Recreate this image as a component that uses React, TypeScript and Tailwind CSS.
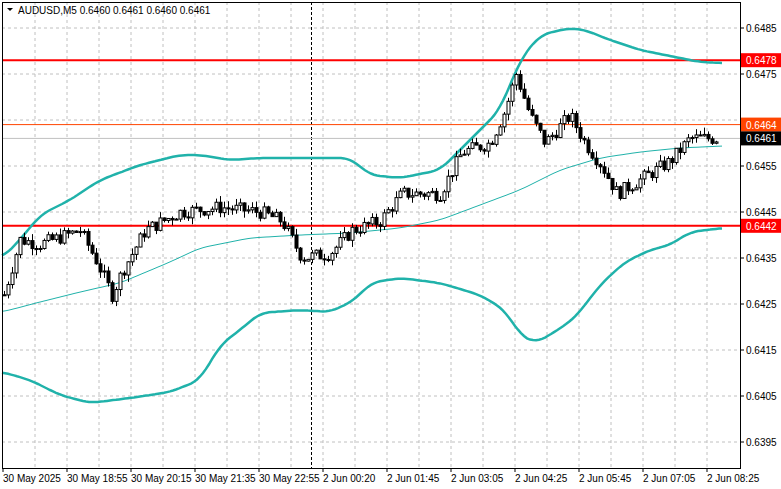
import React from 'react';

const W = 781;
const H = 489;
const R = 740; // right edge of plot
const B = 468; // bottom edge of plot
const y = (p: number) => 28 + (0.6485 - p) * 46000;

const keys: [number, number][] = [
  [4, 0.6427], [20, 0.6439], [40, 0.6438], [80, 0.6441], [95, 0.6435], [112, 0.6427], [122, 0.6432],
  [145, 0.6441], [180, 0.6445], [220, 0.6446], [260, 0.6445], [282, 0.6443], [302, 0.6435],
  [330, 0.6436], [352, 0.6441], [380, 0.6443], [402, 0.6449], [440, 0.6449], [462, 0.6458],
  [490, 0.646], [505, 0.6467], [516, 0.6475], [530, 0.6466], [545, 0.646], [570, 0.6466],
  [585, 0.646], [602, 0.6455], [617, 0.6449], [640, 0.6452], [670, 0.6456], [690, 0.6461], [716, 0.6461],
];

const interp = (k: [number, number][], x: number) => {
  for (let i = 0; i < k.length - 1; i++) {
    const [x0, p0] = k[i];
    const [x1, p1] = k[i + 1];
    if (x >= x0 && x <= x1) return p0 + ((p1 - p0) * (x - x0)) / (x1 - x0);
  }
  return k[k.length - 1][1];
};

let seed = 7;
const rnd = () => {
  seed = (seed * 9301 + 49297) % 233280;
  return seed / 233280;
};

type Candle = { x: number; o: number; c: number; h: number; l: number };
const candles: Candle[] = [];
let prev = 0.6427;
for (let x = 4; x <= 716; x += 4) {
  const t = interp(keys, x) + (rnd() - 0.5) * 0.0003;
  const o = prev;
  const c = t;
  const h = Math.max(o, c) + rnd() * 0.00015;
  const l = Math.min(o, c) - rnd() * 0.00015;
  candles.push({ x, o, c, h, l });
  prev = c;
}

// band shapes in pixel space, read off the chart
const upper: [number, number][] = [
  [2, 258], [20, 240], [40, 215], [70, 200], [100, 180], [140, 165], [180, 155], [200, 155], [230, 160],
  [260, 158], [350, 158], [370, 175], [400, 178], [440, 170], [470, 140], [500, 110], [520, 60],
  [540, 35], [570, 28], [585, 30], [610, 40], [640, 50], [680, 58], [700, 62], [723, 63],
];
const lower: [number, number][] = [
  [2, 372], [30, 380], [60, 395], [90, 403], [130, 398], [170, 392], [200, 380], [220, 345], [240, 330],
  [260, 313], [300, 310], [330, 312], [355, 300], [370, 283], [400, 278], [440, 283], [480, 295],
  [505, 310], [520, 335], [535, 343], [550, 335], [575, 318], [600, 285], [625, 262], [650, 250],
  [670, 245], [690, 232], [723, 228],
];
const middle: [number, number][] = [
  [2, 312], [40, 302], [80, 292], [120, 283], [170, 262], [200, 248], [250, 238], [300, 235],
  [350, 233], [400, 228], [440, 220], [480, 205], [520, 190], [560, 170], [600, 158], [640, 152],
  [680, 148], [723, 146],
];
const smooth = (k: [number, number][]) => {
  const pts: string[] = [];
  for (let x = k[0][0]; x <= k[k.length - 1][0]; x += 3) {
    let s = 0;
    let n = 0;
    for (let d = -9; d <= 9; d += 3) {
      const xx = Math.min(Math.max(x + d, k[0][0]), k[k.length - 1][0]);
      s += interp(k, xx);
      n++;
    }
    pts.push(`${x},${(s / n).toFixed(1)}`);
  }
  return pts.join(' ');
};

const prices = [0.6485, 0.6475, 0.6465, 0.6455, 0.6445, 0.6435, 0.6425, 0.6415, 0.6405, 0.6395];
const vgrid = Array.from({ length: 22 }, (_, i) => 35 + 32 * i);
const times = [
  '30 May 2025', '30 May 18:55', '30 May 20:15', '30 May 21:35', '30 May 22:55', '2 Jun 00:20',
  '2 Jun 01:45', '2 Jun 03:05', '2 Jun 04:25', '2 Jun 05:45', '2 Jun 07:05', '2 Jun 08:25',
];

const tags = [
  { p: 0.6478, bg: '#ff0000', t: '0.6478' },
  { p: 0.6464, bg: '#ff4500', t: '0.6464' },
  { p: 0.6461, bg: '#000000', t: '0.6461' },
  { p: 0.6442, bg: '#ff0000', t: '0.6442' },
];

export default function App() {
  return (
    <div className="w-[781px] h-[489px] bg-white overflow-hidden" style={{ fontFamily: '"Liberation Sans", Arial, sans-serif' }}>
      <svg width={W} height={H} className="block">
        {prices.map((p) => (
          <line key={p} x1={2} x2={R} y1={y(p)} y2={y(p)} stroke="#c0c0c0" strokeDasharray="3 3" />
        ))}
        {vgrid.map((x) => (
          <line key={x} x1={x} x2={x} y1={2} y2={B} stroke="#c0c0c0" strokeDasharray="3 3" />
        ))}
        <line x1={311.5} x2={311.5} y1={2} y2={B} stroke="#000" strokeDasharray="3 2" />
        <line x1={2} x2={R} y1={y(0.6461)} y2={y(0.6461)} stroke="#c0c0c0" />
        <line x1={2} x2={R} y1={y(0.6478)} y2={y(0.6478)} stroke="#ff0000" strokeWidth={2} />
        <line x1={2} x2={R} y1={y(0.6464)} y2={y(0.6464)} stroke="#ff4500" />
        <line x1={2} x2={R} y1={y(0.6442)} y2={y(0.6442)} stroke="#ff0000" strokeWidth={2} />
        <polyline points={smooth(middle)} fill="none" stroke="#20b2aa" strokeWidth={1} />
        <polyline points={smooth(upper)} fill="none" stroke="#20b2aa" strokeWidth={2.5} />
        <polyline points={smooth(lower)} fill="none" stroke="#20b2aa" strokeWidth={2.5} />
        {candles.map((c) => {
          const top = y(Math.max(c.o, c.c));
          const bot = y(Math.min(c.o, c.c));
          const bull = c.c >= c.o;
          return (
            <g key={c.x}>
              <line x1={c.x + 0.5} x2={c.x + 0.5} y1={y(c.h)} y2={y(c.l)} stroke="#000" />
              <rect x={c.x - 1} y={top} width={3} height={Math.max(1, bot - top)} fill={bull ? '#fff' : '#000'} stroke="#000" strokeWidth={1} />
            </g>
          );
        })}
        <rect x={2.5} y={2.5} width={R - 2} height={B - 2} fill="none" stroke="#000" />
        {prices.map((p) => (
          <g key={p}>
            <line x1={R} x2={R + 4} y1={y(p)} y2={y(p)} stroke="#000" />
            {p !== 0.6465 && <text x={746} y={y(p) + 4} fontSize={10} fill="#000">{p.toFixed(4)}</text>}
          </g>
        ))}
        {tags.map((t) => (
          <g key={t.t}>
            <rect x={741} y={y(t.p) - 7} width={40} height={14} fill={t.bg} />
            <text x={746} y={y(t.p) + 4} fontSize={10} fill="#fff">{t.t}</text>
          </g>
        ))}
        {times.map((t, i) => (
          <g key={t}>
            <line x1={3 + 64 * i} x2={3 + 64 * i} y1={B} y2={B + 4} stroke="#000" />
            <text x={3 + 64 * i} y={482} fontSize={10} fill="#000">{t}</text>
          </g>
        ))}
        <polygon points="7,8 13,8 10,11" fill="#000" />
        <text x={18} y={14} fontSize={10} fill="#000">AUDUSD,M5  0.6460 0.6461 0.6460 0.6461</text>
      </svg>
    </div>
  );
}
